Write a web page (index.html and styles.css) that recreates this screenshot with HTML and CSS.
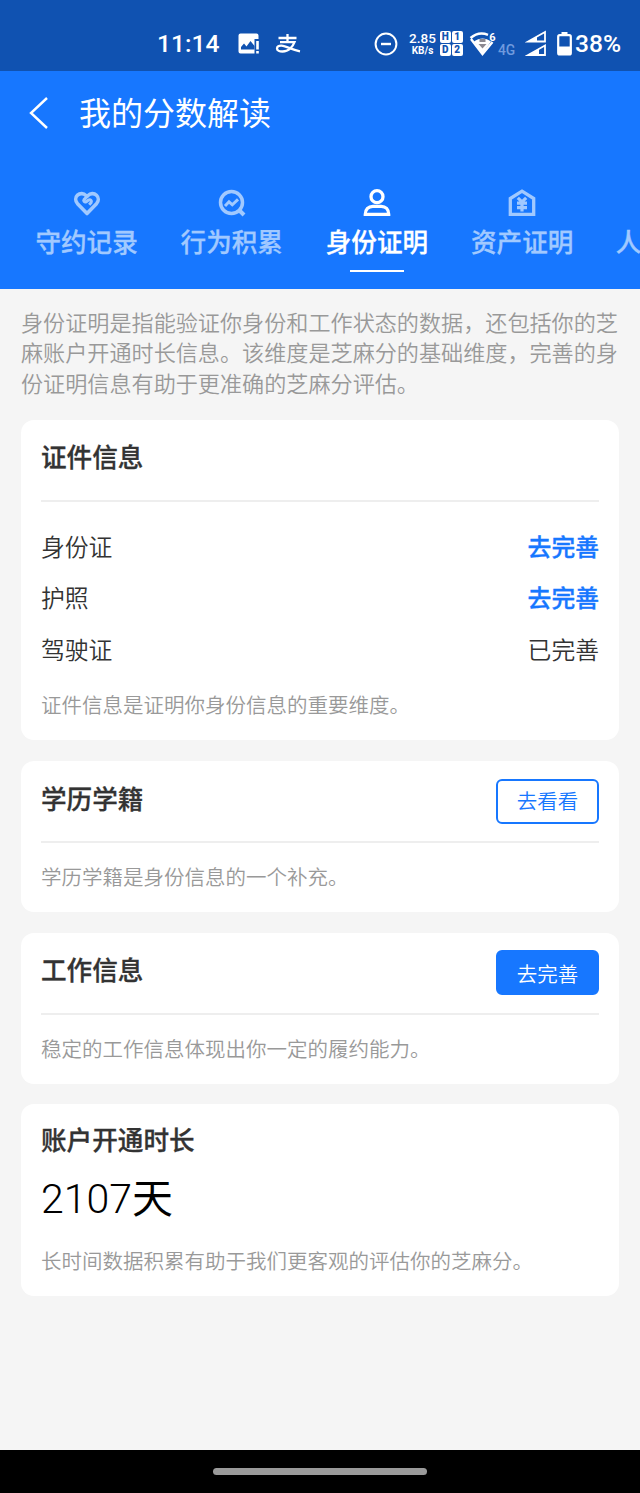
FILE: index.html
```html
<!DOCTYPE html>

<html lang="zh-CN">
    <head>
        <meta charset="utf-8">
        <title>我的分数解读</title>
        <link rel="stylesheet" href="styles.css">
    </head>

    <body>
        <div class="statusbar">
            <span class="clock">11:14</span>
            <svg class="st-picture" width="22" height="22" viewBox="0 0 22 22">
                <path fill="#fff" d="M2.500 0.500h16a2 2 0 0 1 2 2v3.500h-4v14.500h-14a2 2 0 0 1-2-2v-16a2 2 0 0 1 2-2zM18.200 8h2.600v8.500h-2.600zM18.200 18h2.600v2.600h-2.600z"/>
                <path fill="#1052b1" d="M3 16.500v-2.500l3-3.500 2.500 3 4-5.500 4 5v3.500z"/>
            </svg>
            <svg class="st-pay" width="26" height="20" viewBox="0 0 26 20" fill="none" stroke="#fff" stroke-width="2.300">
                <path d="M3.500 4h18M12.500 0v8M5 8.200h14.500c-1.500 4-5.500 9.300-12 9.300-3 0-5.500-1-5.500-3 0-1.800 2-3 4.500-2.800 5 .4 11 4.300 18.500 5.600"/>
            </svg>

            <svg class="st-dnd" width="24" height="24" viewBox="0 0 24 24" fill="none" stroke="#fff" stroke-width="2">
                <circle cx="12" cy="12" r="10.400"/>
                <path d="M7 12h10" stroke-width="2.400"/>
            </svg>
            <div class="speed"><b>2.85</b><span>KB/s</span></div>
            <div class="sims"><i>H</i><i>1</i><i>D</i><i>2</i></div>
            <svg class="st-wifi" width="28" height="26" viewBox="0 0 28 26">
                <path d="M1.500 7c5.500-4.800 12-5.500 17.500-3.200M23.500 11l-10 12-11.500-15" fill="none" stroke="#fff" stroke-width="2.400"/>
                <path fill="#fff" d="M5 10.500c5.500-4 11.500-4 17 0l-8.500 12z"/>
                <path fill="#8c8991" d="M10.500 8h6v3h-6zM9.500 13h8l-4 4.500z"/>
                <text x="20.300" y="9.500" class="wifi-num">6</text>
            </svg>
            <span class="net">4G</span>
            <svg class="st-signal" width="22" height="27" viewBox="0 0 22 27" fill="none" stroke="#fff" stroke-width="1.800">
                <path d="M20 2v9.500h-17zM20 15.500v9.500h-17z"/>
                <path fill="#fff" stroke="none" d="M3 12l9-5.500v5.500zM3 25.500l11-6.500v6.500z"/>
            </svg>
            <svg class="st-battery" width="15" height="24" viewBox="0 0 15 24">
                <path fill="#fff" d="M4.500 0h6v2.500h-6z"/>
                <rect x="1.200" y="3.200" width="12.600" height="19.300" rx="1.500" fill="none" stroke="#fff" stroke-width="2.200"/>
                <path fill="#fff" d="M1 14.500h13v8h-13z"/>
            </svg>
            <span class="percent">38%</span>
        </div>

        <div class="header">
            <div class="titlebar">
                <svg width="20" height="34" viewBox="0 0 20 34" fill="none" stroke="#fff" stroke-width="2.400">
                    <path d="M18 2l-16 15 16 15"/>
                </svg>
                <h1>我的分数解读</h1>
            </div>

            <div class="tabs">
                <div class="tab">
                    <svg width="30" height="30" viewBox="0 0 30 30" fill="none" stroke="currentColor" stroke-width="3.600" stroke-linejoin="round">
                        <path d="M15 25.500l-9.500-9.800c-2.400-2.800-2.300-6.400 0-8.500 2.500-2.300 6.300-2 8.300.2l1.200 1 1.200-1c2-2.200 5.800-2.500 8.300-.2 2.300 2.100 2.400 5.700 0 8.500z"/>
                        <path stroke-width="3" d="M15.500 8l-3.500 3.600c-.9 1.200.6 3.200 2.300 2.100l2.300-1.600c1.700-1 3.700 1 2.600 2.500l-2 2.200"/>
                    </svg>
                    <span>守约记录</span>
                </div>
                <div class="tab">
                    <svg width="30" height="30" viewBox="0 0 30 30" fill="none" stroke="currentColor" stroke-width="3.500">
                        <circle cx="14.500" cy="14.500" r="11"/>
                        <path d="M22 22l5 5" stroke-width="4"/>
                        <path d="M8 18l4-4.200 3.300 3 5.700-5.400" stroke-width="3"/>
                    </svg>
                    <span>行为积累</span>
                </div>
                <div class="tab active">
                    <svg width="30" height="30" viewBox="0 0 30 30" fill="none" stroke="currentColor" stroke-width="3.300">
                        <circle cx="15" cy="8.700" r="6"/>
                        <path d="M3.300 26.300h23.400c0-5-3.200-8-7.500-8h-8.400c-4.300 0-7.500 3-7.500 8z"/>
                    </svg>
                    <span>身份证明</span>
                </div>
                <div class="tab">
                    <svg width="30" height="30" viewBox="0 0 30 30" fill="none" stroke="currentColor" stroke-width="3.300">
                        <path d="M15 3.200l11.700 7.300v15.800h-23.400v-15.800z"/>
                        <path d="M10.800 9.800l4.200 4 4.200-4M15 13v10.500M10 15.200h10M10 19.700h10" stroke-width="3.200"/>
                    </svg>
                    <span>资产证明</span>
                </div>
                <div class="tab">
                    <span>人</span>
                </div>
            </div>
        </div>

        <div class="content">
            <p class="intro">身份证明是指能验证你身份和工作状态的数据，还包括你的芝麻账户开通时长信息。该维度是芝麻分的基础维度，完善的身份证明信息有助于更准确的芝麻分评估。</p>

            <div class="card">
                <div class="card-head"><h2>证件信息</h2></div>
                <div class="rows">
                    <div class="row"><span>身份证</span><a>去完善</a></div>
                    <div class="row"><span>护照</span><a>去完善</a></div>
                    <div class="row"><span>驾驶证</span><span>已完善</span></div>
                </div>
                <p class="note note-rows">证件信息是证明你身份信息的重要维度。</p>
            </div>

            <div class="card">
                <div class="card-head">
                    <h2>学历学籍</h2>
                    <button class="btn btn-outline">去看看</button>
                </div>
                <p class="note">学历学籍是身份信息的一个补充。</p>
            </div>

            <div class="card">
                <div class="card-head">
                    <h2>工作信息</h2>
                    <button class="btn btn-fill">去完善</button>
                </div>
                <p class="note">稳定的工作信息体现出你一定的履约能力。</p>
            </div>

            <div class="card card-days">
                <h2>账户开通时长</h2>
                <div class="days">2107<span>天</span></div>
                <p class="note">长时间数据积累有助于我们更客观的评估你的芝麻分。</p>
            </div>
        </div>

        <div class="navbar"><div class="pill"></div></div>
    </body>
</html>
```

FILE: styles.css
```css
* {box-sizing: border-box}

body
{
    font-family: Roboto, "Noto Sans CJK SC", sans-serif;
    background-color: #f5f5f5;
    color: #333;
    width: 640px;
    height: 1493px;
    margin: 0;
    overflow: hidden;
    display: flex;
    flex-direction: column;
}

h1, h2, p {
  margin: 0;
}

svg {
  display: block;
  flex: none;
}

/* Phone status bar */
.statusbar {
  height: 71px;
  flex: none;
  padding: 16px 0 0 157px;
  display: flex;
  align-items: center;
  background: #1052b1;
  color: white;
  white-space: nowrap;
}

.clock {
  width: 81px;
  font-size: 24.6px;
  font-weight: 500;
}

.st-pay {
  margin-left: 15px;
}

.st-dnd {
  margin-left: 73px;
}

.speed {
  width: 31px;
  margin-left: 9px;
  display: flex;
  flex-direction: column;
  align-items: center;
  font-size: 13.5px;
  line-height: 14px;
}

.speed b {
  font-weight: 500;
}

.speed span {
  font-size: 10px;
  font-weight: 700;
  line-height: 11px;
}

.sims {
  width: 22px;
  margin-left: 2px;
  display: grid;
  grid-template-columns: 10.5px 10.5px;
  gap: 1.5px;
}

.sims i {
  height: 11.5px;
  border-radius: 2px;
  background: white;
  color: #1052b1;
  font-size: 10px;
  font-style: normal;
  font-weight: 900;
  line-height: 12px;
  text-align: center;
}

.st-wifi {
  margin-left: 7px;
}

.wifi-num {
  fill: white;
  font-size: 11px;
  font-weight: 700;
}

.net {
  width: 19px;
  margin: 13px 0 0 1px;
  color: #6f9ade;
  font-size: 13.8px;
  font-weight: 500;
}

.st-signal {
  margin-left: 8px;
}

.st-battery {
  margin-left: 10px;
}

.percent {
  margin-left: 3px;
  font-size: 24.6px;
  font-weight: 500;
}

/* Blue header with tabs */
.header {
  height: 218px;
  flex: none;
  background: #1777ff;
  color: white;
}

.titlebar {
  height: 84px;
  padding-left: 29px;
  display: flex;
  align-items: center;
  gap: 30px;
}

.titlebar h1 {
  padding-top: 1px;
  font-size: 32px;
  font-weight: 400;
  line-height: 40px;
}

.tabs {
  padding: 33px 0 0 14px;
  display: flex;
  overflow: hidden;
}

.tab {
  width: 145.2px;
  flex: none;
  display: flex;
  flex-direction: column;
  align-items: center;
  justify-content: flex-end;
  color: #a1c9ff;
  font-size: 25.6px;
  font-weight: 500;
  -webkit-text-stroke: 0.3px;
  line-height: 34px;
  padding-bottom: 12px;
}

.tab span {
  margin-top: 8px;
}

.tab:last-child {
  width: auto;
  padding-left: 21px;
}

.active {
  color: white;
  padding-bottom: 0;
}

.active::after {
  content: "";
  width: 54px;
  height: 2px;
  margin-top: 10px;
  background: white;
}

.content {
  flex: 1;
  padding: 19px 21px 0 21px;
}

.intro {
  margin: 0 -1px 21px 0;
  color: #999;
  font-size: 22.12px;
  font-weight: 350;
  line-height: 30.3px;
}

.card {
  margin-bottom: 20.7px;
  padding: 0 20px 18px 20px;
  border-radius: 13px;
  background: white;
}

.card-head {
  height: 82px;
  display: flex;
  align-items: center;
  justify-content: space-between;
  border-bottom: 2px solid #eee;
}

h2 {
  font-size: 25.6px;
  font-weight: 500;
  -webkit-text-stroke: 0.3px;
  line-height: 36px;
}

.card-head h2 {
  padding-bottom: 3px;
}

.rows {
  padding-top: 17.5px;
}

.row {
  height: 51.5px;
  display: flex;
  align-items: center;
  justify-content: space-between;
  font-size: 23.8px;
  font-weight: 350;
}

.row a {
  color: #1777ff;
  font-weight: 500;
  -webkit-text-stroke: 0.3px;
}

.note {
  padding-top: 20px;
  color: #999;
  font-size: 20.5px;
  font-weight: 350;
  line-height: 31px;
}

.note-rows {
  padding-top: 17.5px;
}

.btn {
  width: 103px;
  height: 45px;
  padding: 0 0 2px 0;
  border: 2px solid #1777ff;
  border-radius: 6px;
  font-family: inherit;
  font-size: 20.5px;
  font-weight: 350;
}

.btn-outline {
  background: white;
  color: #1777ff;
}

.btn-fill {
  padding: 0;
  background: #1777ff;
  color: white;
}

.card-days {
  padding-top: 19px;
}

.days {
  margin-top: 12px;
  color: black;
  font-size: 41px;
  font-weight: 300;
  line-height: 56px;
}

.days span {
  font-weight: 400;
}

/* Gesture bar */
.navbar {
  height: 43px;
  flex: none;
  display: flex;
  align-items: center;
  justify-content: center;
  background: black;
}

.pill {
  width: 214px;
  height: 7px;
  border-radius: 4px;
  background: #9a9a9a;
}
```
